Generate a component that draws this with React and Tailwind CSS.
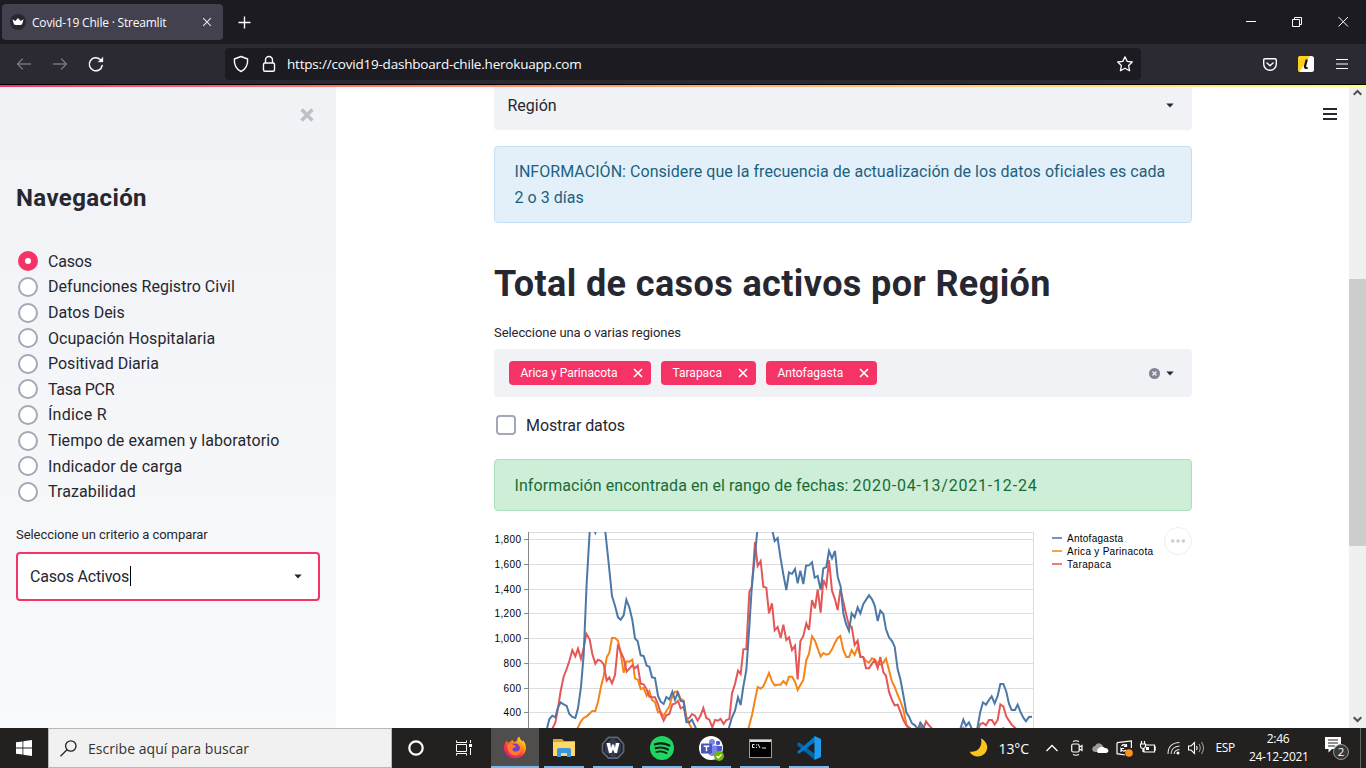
import React from "react";

const regions = [
  ["Casos", "tracking-[-0.2px]"],
  ["Defunciones Registro Civil", "tracking-[0.03px]"],
  ["Datos Deis", ""],
  ["Ocupación Hospitalaria", "tracking-[0.04px]"],
  ["Positivad Diaria", ""],
  ["Tasa PCR", "tracking-[-0.3px]"],
  ["Índice R", "tracking-[0.25px]"],
  ["Tiempo de examen y laboratorio", "tracking-[0.09px]"],
  ["Indicador de carga", "tracking-[0.11px]"],
  ["Trazabilidad", "tracking-[0.08px]"],
];

const ticks = [
  ["1,800", 539.5], ["1,600", 564.5], ["1,400", 589.5], ["1,200", 613.5],
  ["1,000", 638.5], ["800", 663.5], ["600", 688.5], ["400", 712.5],
];

const arica = [
  "290,630 303,604 311,594 320,589 337,573 346,573 354,545 363,500 371,468 380,412 388,398 396,354 405,354 414,362 422,400 431,458 439,424 448,425 457,419 465,475 474,480 482,507 491,504 500,527 508,513 516,540 525,547 534,577 542,576 551,588 559,573 568,560 577,527 585,515 594,516 602,537 611,542 619,590 628,612 638,630",
  "804,630 816,585 825,540 833,501 842,506 850,499 859,478 867,459 876,484 884,496 893,494 902,494 910,483 919,493 927,470 936,470 945,485 953,510 961,495 970,480 979,420 987,402 996,349 1005,362 1013,385 1022,410 1030,399 1039,404 1047,402 1056,388 1065,368 1073,354 1081,348 1090,390 1099,411 1107,411 1115,390 1124,405 1133,380 1141,408 1150,413 1158,423 1167,428 1176,415 1184,418 1193,430 1201,434 1210,428 1218,416 1227,450 1236,485 1244,500 1253,525 1261,543 1270,568 1279,612 1285,630",
  "1443,630 1450,623 1457,630",
  "1563,630 1570,624 1577,630",
];
const tarapaca = [
  "215,630 226,608 234,565 242,513 251,470 260,447 268,423 277,390 286,409 294,386 303,417 311,385 319,341 329,358 337,402 346,431 354,419 363,423 371,433 380,482 388,472 396,490 405,465 414,373 422,395 431,415 440,455 448,446 457,436 465,445 473,437 482,491 491,493 500,508 508,530 516,532 525,532 534,553 542,580 551,602 559,586 568,582 577,553 585,551 594,543 602,565 611,560 619,597 628,594 636,582 645,587 653,602 662,586 670,564 679,594 688,599 697,622 705,600 714,602 722,597 731,612 739,600 748,597 756,520 765,492 774,452 782,462 790,388 799,387 808,215 816,200 825,66 833,138 842,123 850,200 859,203 867,280 876,250 884,331 893,321 902,354 910,314 919,360 927,352 936,390 945,377 953,478 961,364 970,348 979,310 987,330 996,240 1005,265 1013,208 1022,278 1030,180 1039,200 1047,120 1056,212 1065,238 1073,270 1081,208 1090,245 1099,285 1107,317 1115,320 1124,375 1133,362 1141,411 1150,411 1158,445 1167,445 1176,431 1184,420 1193,444 1201,411 1210,456 1218,468 1227,515 1236,540 1244,556 1253,554 1261,575 1270,600 1279,616 1290,624 1300,632",
  "1317,630 1321,618 1330,628 1338,604 1347,616 1360,630",
  "1494,630 1501,612 1509,609 1518,616 1527,600 1536,600 1544,614 1553,600 1561,553 1570,559 1579,590 1587,602 1595,614 1610,628",
];
const antofagasta = [
  "200,630 208,597 217,587 226,592 234,562 242,547 251,553 260,558 268,582 277,591 286,594 294,565 303,500 311,405 320,190 329,36 338,20 346,38 352,20 370,20 376,36 385,120 396,228 405,257 414,292 422,299 431,286 439,239 448,262 457,300 465,355 473,364 482,406 491,408 500,437 508,440 516,472 525,474 534,527 542,545 551,552 559,531 568,538 577,515 585,540 593,518 602,543 611,545 619,606 628,607 636,599 650,630",
  "745,630 756,592 765,572 774,532 782,555 790,500 799,450 808,320 816,190 825,105 832,30 840,10 870,10 878,36 884,63 893,54 901,110 910,163 919,210 927,157 936,162 945,147 953,190 961,152 970,192 978,137 987,136 996,127 1004,173 1013,168 1022,210 1030,145 1039,141 1047,93 1056,115 1065,93 1073,170 1082,200 1090,280 1098,312 1107,333 1115,280 1124,292 1133,262 1141,280 1150,252 1167,226 1176,238 1184,256 1193,303 1201,272 1210,282 1218,328 1227,352 1236,363 1244,380 1253,448 1261,477 1270,525 1279,577 1287,590 1296,610 1305,616 1314,628 1321,608 1330,620 1338,632",
  "1440,630 1450,599 1458,618 1467,607 1477,630",
  "1491,630 1501,575 1509,547 1518,554 1527,540 1535,529 1544,550 1553,528 1561,492 1570,492 1579,515 1587,552 1595,570 1605,570 1613,554 1621,575 1630,593 1638,604 1647,591 1656,590",
];

function Series({ lines, color }) {
  return lines.map((p) => (
    <polyline key={p} points={p} fill="none" stroke={color} strokeWidth="6" strokeLinejoin="miter" />
  ));
}

function Chart() {
  return (
    <svg className="mt-4 block shrink-0" width="698" height="201" viewBox="494 527 698 201">
      <defs>
        <clipPath id="plot"><rect x="528" y="532" width="506" height="196" /></clipPath>
      </defs>
      <g stroke="#ddd" strokeWidth="1" fill="none">
        {ticks.map(([l, y]) => <path key={l} d={`M528 ${y}H1034`} />)}
        <path d="M528 532.5H1033.5V728" />
      </g>
      <g stroke="#888" strokeWidth="1" fill="none">
        <path d="M528.5 532V728" />
        {ticks.map(([l, y]) => <path key={l} d={`M524 ${y}H529`} />)}
      </g>
      <g fontFamily="Liberation Sans, sans-serif" fontSize="10" fill="#000">
        {ticks.map(([l, y]) => (
          <text key={l} x="521" y={y + 3.5} textAnchor="end" textLength={l.length === 5 ? 26.5 : 17.5}>{l}</text>
        ))}
        <text x="1067" y="541.5" textLength="56">Antofagasta</text>
        <text x="1067" y="554.5" textLength="86">Arica y Parinacota</text>
        <text x="1067" y="567.5" textLength="44">Tarapaca</text>
      </g>
      <g clipPath="url(#plot)">
        <g transform="translate(480 520) scale(0.33333)">
          <Series lines={arica} color="#f58518" />
          <Series lines={tarapaca} color="#e45756" />
          <Series lines={antofagasta} color="#4c78a8" />
        </g>
      </g>
      <path d="M1052 538H1062" stroke="#7496bd" strokeWidth="2" />
      <path d="M1052 551H1062" stroke="#f9a04d" strokeWidth="2" />
      <path d="M1052 564H1062" stroke="#eb7d7c" strokeWidth="2" />
      <circle cx="1178" cy="541" r="13.5" fill="#fff" stroke="#eee" />
      <g fill="#cfcfcf"><circle cx="1172.7" cy="541" r="1.8" /><circle cx="1178" cy="541" r="1.8" /><circle cx="1183.3" cy="541" r="1.8" /></g>
    </svg>
  );
}

function Caret() {
  return <svg width="8" height="5" viewBox="0 0 8 5" className="shrink-0"><path d="M0.3 0.4H7.7L4 4.6Z" fill="#262730" /></svg>;
}

function Tag({ children, w, tracking }) {
  return (
    <div className={"flex h-6 items-center justify-between rounded bg-[#f63366] pr-2 pl-[11.5px] text-[12px] text-white " + w}>
      <span className={"whitespace-nowrap " + tracking}>{children}</span>
      <svg width="10" height="10" viewBox="0 0 10 10" stroke="#fff" strokeWidth="1.7"><path d="M1 1L9 9M9 1L1 9" /></svg>
    </div>
  );
}

function Browser() {
  return (
    <header className="shrink-0 font-['Open_Sans','Noto_Sans',sans-serif] text-[#fbfbfe]">
      <div className="flex h-11 bg-[#1c1b22]">
        <div className="mt-1 ml-0.5 flex h-9 w-[221px] items-center rounded bg-[#42414d] pr-[11px] pl-2">
          <svg width="16" height="16" viewBox="0 0 16 16"><circle cx="8" cy="8" r="8" fill="#262730" /><path d="M2.4 5.2L5.3 7L8 4L10.7 7L13.6 5.2L12 10.4C9.5 11.3 6.5 11.3 4 10.4Z" fill="#fff" /></svg>
          <span className="ml-1.5 flex-1 pt-0.5 text-[12px] tracking-[-0.2px] whitespace-nowrap">Covid-19 Chile · Streamlit</span>
          <svg width="10" height="10" viewBox="0 0 10 10" stroke="#e4e4ea" strokeWidth="1.1"><path d="M1.2 1.2L8.8 8.8M8.8 1.2L1.2 8.8" /></svg>
        </div>
        <svg className="mt-4 ml-[15px]" width="13" height="13" viewBox="0 0 13 13" stroke="#fff" strokeWidth="1.4"><path d="M6.5 .5V12.5M.5 6.5H12.5" /></svg>
        <div className="flex-1" />
        <svg className="mt-4 mr-[17px]" width="103" height="12" viewBox="0 0 103 12" fill="none" stroke="#fff">
          <path d="M0 5.5H10M46.5 3.5H53.5V10.5H46.5ZM48.5 3V1.5H55.5V8.5H54" />
          <path d="M92.5 1L102 10.5M102 1L92.5 10.5" />
        </svg>
      </div>
      <div className="flex h-[41px] items-center border-b border-black bg-[#2b2a33]">
        <svg className="ml-4" width="90" height="18" viewBox="0 0 90 18" fill="none" strokeWidth="1.3" strokeLinecap="round" strokeLinejoin="round">
          <g stroke="#77767e"><path d="M14.5 9H1.5M6.5 4L1.5 9L6.5 14" /><path d="M37.5 9H50.5M45.5 4L50.5 9L45.5 14" /></g>
          <g stroke="#fbfbfe" strokeWidth="1.5"><path d="M86.2 10.5A6.5 6.5 0 1 1 84.2 4.5L86 6.2" /><path d="M87 2.2V7H82.2Z" fill="#fbfbfe" strokeWidth=".3" /></g>
        </svg>
        <div className="ml-[119px] flex h-8 w-[916px] items-center rounded bg-[#1c1b22]">
          <svg className="ml-2 shrink-0" width="44" height="18" viewBox="0 0 44 18" fill="none" stroke="#fbfbfe" strokeWidth="1.4" strokeLinejoin="round">
            <path d="M8 1.5L14.6 4C15.2 9.5 12.5 14.5 8 16.5C3.5 14.5 .8 9.5 1.4 4Z" />
            <rect x="30.5" y="8" width="11" height="8.3" rx="1.5" /><path d="M32.5 8V5A3.5 3.5 0 0 1 39.5 5V8" />
          </svg>
          <span className="ml-[10px] flex-1 pt-px text-[13.5px] tracking-[-0.2px] whitespace-nowrap">https://covid19-dashboard-chile.herokuapp.com</span>
          <svg className="mr-2 shrink-0" width="16" height="16" viewBox="0 0 16 16" fill="none" stroke="#fbfbfe" strokeWidth="1.3" strokeLinejoin="round"><path d="M8 .8L10.2 5.4L15.3 6L11.6 9.5L12.6 14.8L8 12.2L3.4 14.8L4.4 9.5L.7 6L5.8 5.4Z" /></svg>
        </div>
        <div className="flex-1" />
        <svg width="14" height="13" viewBox="0 0 14 13" fill="none" stroke="#fbfbfe" strokeWidth="1.4" strokeLinejoin="round" strokeLinecap="round"><path d="M2 .8H12Q13.3 .8 13.3 2V6A6.3 6.2 0 0 1 .7 6V2Q.7 .8 2 .8Z" /><path d="M4 5L7 7.8L10 5" /></svg>
        <svg className="ml-[21px]" width="16" height="16" viewBox="0 0 16 16"><rect width="16" height="16" rx="2.5" fill="#fff" /><path d="M2.5 0H12L1.5 15.8Q0 15.5 0 13.5V2.5Q0 0 2.5 0Z" fill="#fdd019" /><path d="M8.8 3.5L7 10.3Q6.700 12.6 9.600 11.8" fill="none" stroke="#111" strokeWidth="2.2" /></svg>
        <svg className="mr-[18px] ml-[22px]" width="12" height="12" viewBox="0 0 12 12" stroke="#fbfbfe" strokeWidth="1.2"><path d="M0 1.5H12M0 6H12M0 10.5H12" /></svg>
      </div>
      <div className="h-0.5 bg-linear-to-r from-[#f63366] to-[#fffd80]" />
    </header>
  );
}

function Sidebar() {
  return (
    <aside className="flex w-[336px] shrink-0 flex-col bg-linear-to-b from-[#f0f2f6] to-[#f9fafb] px-4">
      <svg className="mt-[21px] mr-[6px] shrink-0 self-end" width="14" height="14" viewBox="0 0 14 14" stroke="#bfc0c5" strokeWidth="3.6"><path d="M1.6 1.6L12.4 12.4M12.4 1.6L1.6 12.4" /></svg>
      <h2 className="mt-[61px] text-[24px] leading-[30px] font-bold tracking-[0.4px]">Navegación</h2>
      <div className="mt-[35.6px] text-[16px]">
        {regions.map(([name, t], i) => (
          <div key={name} className="flex h-[25.6px] items-center pl-0.5">
            <span className={"flex size-5 shrink-0 items-center justify-center rounded-full " + (i === 0 ? "bg-[#f63366]" : "border-2 border-[#a3a8b8] bg-white")}>
              {i === 0 && <span className="size-1.5 rounded-full bg-white" />}
            </span>
            <span className={"pt-px pl-2.5 whitespace-nowrap " + t}>{name}</span>
          </div>
        ))}
      </div>
      <div className="mt-[20.4px] text-[13px] leading-5 tracking-[-0.05px]">Seleccione un criterio a comparar</div>
      <div className="mt-[7px] flex h-[49px] shrink-0 items-center rounded border-2 border-[#f63366] bg-white pr-4 pl-3">
        <span className="pt-0.5 text-[16px] tracking-[-0.2px]">Casos Activos</span>
        <span className="ml-px h-5 w-px bg-black" />
        <span className="flex-1" />
        <Caret />
      </div>
    </aside>
  );
}

function Main() {
  return (
    <main className="flex min-w-0 flex-1 overflow-hidden bg-white">
      <div className="ml-[158px] flex w-[698px] shrink-0 flex-col">
        <div className="flex h-[43px] shrink-0 items-start justify-between rounded-b bg-[#f0f2f6] pr-[18px] pl-[13.5px]">
          <span className="mt-[7px] text-[16px] leading-6">Región</span>
          <span className="mt-4"><Caret /></span>
        </div>
        <div className="mt-4 h-[77px] shrink-0 rounded border border-[#c5e0f2] bg-[#e4f0f9] px-[19.5px] py-3 text-[16px] leading-[25.6px] tracking-[0.045px] whitespace-nowrap text-[#1a6280]">
          INFORMACIÓN: Considere que la frecuencia de actualización de los datos oficiales es cada<br />2 o 3 días
        </div>
        <h1 className="mt-[36px] text-[36px] leading-[50px] font-bold tracking-[0.4px] whitespace-nowrap">Total de casos activos por Región</h1>
        <div className="mt-[14px] text-[13px] leading-5 tracking-[-0.07px]">Seleccione una o varias regiones</div>
        <div className="mt-[6px] flex h-12 shrink-0 items-center gap-2.5 rounded bg-[#f0f2f6] pr-[18px] pl-[15px]">
          <Tag w="w-[142px]" tracking="">Arica y Parinacota</Tag>
          <Tag w="w-[95px]" tracking="">Tarapaca</Tag>
          <Tag w="w-[111px]" tracking="">Antofagasta</Tag>
          <span className="flex-1" />
          <svg className="-mr-[3.5px]" width="11" height="11" viewBox="0 0 11 11"><circle cx="5.5" cy="5.5" r="5.5" fill="#808495" /><path d="M3.5 3.5L7.5 7.5M7.5 3.5L3.5 7.5" stroke="#f0f2f6" strokeWidth="1.3" /></svg>
          <Caret />
        </div>
        <div className="mt-[18px] flex h-5 items-center pl-0.5">
          <span className="size-5 rounded border-2 border-[#a3a8b8] bg-white" />
          <span className="pt-0.5 pl-2.5 text-[16px] tracking-[-0.08px]">Mostrar datos</span>
        </div>
        <div className="mt-6 flex h-[52px] shrink-0 items-center rounded border border-[#a9dfb9] bg-[#ceeed8] px-[19.5px] pt-0.5 text-[16px] whitespace-pre text-[#176c36]">
          <span className="tracking-[0.08px]">Información encontrada en el rango de fechas: </span>
          <span className="tracking-[0.8px]">2020-04-13/2021-12-24</span>
        </div>
        <Chart />
      </div>
      <svg className="mt-[21px] ml-[131px] shrink-0" width="14" height="13" viewBox="0 0 14 13" stroke="#262730" strokeWidth="2"><path d="M0 1H14M0 6H14M0 11H14" /></svg>
    </main>
  );
}

function Scrollbar() {
  return (
    <div className="flex w-[17px] shrink-0 flex-col items-center bg-[#f0f0f0]">
      <svg className="mt-[2px]" width="9" height="7" viewBox="0 0 9 7" fill="none" stroke="#505050" strokeWidth="2"><path d="M.7 5.8L4.5 2L8.3 5.8" /></svg>
      <div className="mt-[183px] h-[267px] w-full bg-[#cdcdcd]" />
      <div className="flex-1" />
      <svg className="mb-[5px]" width="9" height="7" viewBox="0 0 9 7" fill="none" stroke="#505050" strokeWidth="2"><path d="M.7 1.2L4.5 5L8.3 1.2" /></svg>
    </div>
  );
}

function TaskApp({ children, active }) {
  return (
    <div className={"flex h-10 flex-col items-center " + (active ? "w-12 bg-[#4f4e4d]" : "w-10")}>
      <div className="flex flex-1 items-center justify-center pt-0.5">{children}</div>
      <div className="h-0.5 w-full bg-[#76b9ed]" />
    </div>
  );
}

function Taskbar() {
  return (
    <footer className="flex h-10 shrink-0 items-center bg-[#22211f] font-['Open_Sans','Noto_Sans',sans-serif] text-white">
      <div className="flex w-12 justify-center">
        <svg width="16" height="16" viewBox="0 0 16 16" fill="#fff"><path d="M0 2.3L6.5 1.4V7.6H0ZM7.3 1.3L16 0V7.6H7.3ZM0 8.4H6.5V14.6L0 13.7ZM7.3 8.4H16V16L7.3 14.7Z" /></svg>
      </div>
      <div className="flex h-10 w-[344px] items-center border border-[#b8b8b8] bg-[#f1f1f1] pl-[11px]">
        <svg width="17" height="17" viewBox="0 0 17 17" fill="none" stroke="#222" strokeWidth="1.3"><circle cx="10.8" cy="6" r="5.2" /><path d="M7 9.8L.5 16.3" /></svg>
        <span className="ml-[11px] text-[14px] tracking-[0.04px] text-[#333]">Escribe aquí para buscar</span>
      </div>
      <svg className="ml-4" width="16" height="16" viewBox="0 0 16 16"><circle cx="8" cy="8" r="6.7" fill="none" stroke="#fff" strokeWidth="2.2" /></svg>
      <svg className="ml-8" width="16" height="16" viewBox="0 0 16 16" fill="none" stroke="#fff"><path d="M.5 .5V2.5H10.5V.5M.5 15.5V13.5H10.5V15.5M.5 4.5H10.5V11.5H.5ZM14.500 0V3M14.5 8V15" /><path d="M13 4H16V7H13Z" fill="#fff" stroke="none" /></svg>
      <div className="ml-[19px] flex">
        <TaskApp active>
          <svg width="24" height="24" viewBox="0 0 24 24">
            <defs><linearGradient id="fx" x1="1" y1="0" x2=".3" y2="1"><stop offset="0" stopColor="#fff44f" /><stop offset=".4" stopColor="#ff980e" /><stop offset=".7" stopColor="#ff3647" /><stop offset="1" stopColor="#e31587" /></linearGradient></defs>
            <path d="M3.5 4.5L5 7Q6 5.5 8 5.5L9 3.5L11 6L14 5Q14 2 16 .5Q17 3.500 19.500 5.5Q20 5 20 4Q23.500 8 23 13.5A11.2 10.7 0 0 1 .8 12.5Q.8 8 3.500 4.5Z" fill="url(#fx)" />
            <circle cx="12" cy="12.500" r="5" fill="#7540c9" /><path d="M4 9.5Q7 7 10.5 8.8L13 10.3Q12 12 9.500 12.2Q9 15.500 13 15.500Q17 15.500 17.500 10.500Q20 18 13 19.500Q5 20 4 9.500Z" fill="#ff7a2a" />
          </svg>
        </TaskApp>
        <div className="ml-[5px] flex gap-[9px]">
          <TaskApp><svg width="22" height="20" viewBox="0 0 22 20"><path d="M0 1H9L11 3H22V18H0Z" fill="#e5a420" /><path d="M0 4H22V18H0Z" fill="#ffd868" /><path d="M4 19V12Q4 10 6 10H16Q18 10 18 12V19H14V15H8V19Z" fill="#3b96dd" /></svg></TaskApp>
          <TaskApp><svg width="24" height="24" viewBox="0 0 24 24"><path d="M7.5 1.5H16.5L22.5 8V16L16.5 22H7.5L1.5 16V8Z" fill="#1b1e2b" stroke="#596174" strokeWidth="1.8" /><path d="M12 2L20 8V16L12 22L4 16V8Z" fill="#343a4d" /><path d="M5.500 7H9.200L10 12L11 8.500H13L14 12L14.800 7H18.500L16 17H13.500L12 13.500L10.500 17H8Z" fill="#fff" /></svg></TaskApp>
          <TaskApp><svg width="24" height="24" viewBox="0 0 24 24"><circle cx="12" cy="12" r="12" fill="#1ed760" /><g fill="none" stroke="#141d17" strokeLinecap="round"><path d="M5 8.3Q12.5 6 19.3 9.5" strokeWidth="2.4" /><path d="M5.6 12.3Q12 10.3 18 13.5" strokeWidth="2" /><path d="M6.3 16Q12 14.5 16.8 17.2" strokeWidth="1.7" /></g></svg></TaskApp>
          <TaskApp><svg width="25" height="25" viewBox="0 0 25 25"><circle cx="12" cy="12" r="12" fill="#fff" /><circle cx="13" cy="6" r="3" fill="#7b83eb" /><circle cx="19" cy="7" r="2.2" fill="#5059c9" /><path d="M9 9.5H18V16Q17 20 13.5 20Q10 20 9 17Z" fill="#7b83eb" /><path d="M18 10H23V14Q22 17.5 18 17Z" fill="#5059c9" /><rect x="2" y="7.5" width="11" height="10" rx="1" fill="#4b53bc" /><path d="M4.7 10.3H10.3M7.5 10.3V15.3" stroke="#fff" strokeWidth="1.5" /><circle cx="20" cy="20" r="5" fill="#6bb700" /><path d="M17.5 20L19.3 21.8L22.5 18.4" fill="none" stroke="#fff" strokeWidth="1.4" /></svg></TaskApp>
          <TaskApp><svg width="23" height="19" viewBox="0 0 23 19"><rect x=".5" y=".5" width="22" height="18" fill="#000" stroke="#999" /><path d="M1 1H22V3H1Z" fill="#d8d8d8" /><path d="M5.5 5.5H3.5V8.5H5.5M7.5 5.5V6.5M7.5 8V9M9 5L11 9M13 9H17" stroke="#fff" fill="none" strokeWidth=".9" /></svg></TaskApp>
          <TaskApp><svg width="24" height="24" viewBox="0 0 24 24"><path d="M0 8L2 6.3L18 18V24L1 10Z" fill="#0065a9" /><path d="M0 16L18 0V6L2 17.7Z" fill="#007acc" /><path d="M17.5 0L24 3V21L17.5 24Z" fill="#1f9cf0" /></svg></TaskApp>
        </div>
      </div>
      <div className="flex-1" />
      <svg width="19" height="20" viewBox="0 0 19 20"><path d="M12 .5C23 6 18 19 8 18.500Q3 18 .5 13.500C8 15 14 9 12 .5Z" fill="#fcc51c" /></svg>
      <span className="ml-[10px] pt-px text-[14px] tracking-[-0.1px]">13°C</span>
      <svg className="ml-[17px]" width="12" height="8" viewBox="0 0 12 8" fill="none" stroke="#fff" strokeWidth="1.3"><path d="M.5 7L6 1.5L11.5 7" /></svg>
      <svg className="ml-[13px]" width="12" height="16" viewBox="0 0 12 16" fill="none" stroke="#fff" strokeWidth="1.2"><rect x=".7" y="4" width="7.5" height="8" rx="1.5" /><path d="M8.5 7L11 5.5V10.5L8.5 9M2 1.5Q5 0 8 1.5M2 14.5Q5 16 8 14.5" /></svg>
      <svg className="ml-[9px]" width="17" height="12" viewBox="0 0 17 12"><path d="M1 9A3 3 0 0 1 3 4Q5 0 9 2Q11 3 11 5L6 10H3Q1.5 10 1 9Z" fill="#9a9a9a" /><path d="M6 11A3 3 0 0 1 7 6Q10 3 13 6Q16 6 16.5 9Q16 11 14 11Z" fill="#fff" /></svg>
      <svg className="ml-[7px]" width="17" height="17" viewBox="0 0 17 17" fill="none" stroke="#fff" strokeWidth="1.2"><path d="M1 2.700L15.400 1V8M9 15L1 13.700V2.700" /><path d="M5.500 6Q8 3.500 10.500 6M10.500 4V6.500H8M5 8.500H8M5 12V9Q7 12.500 10 10" /><circle cx="13" cy="13" r="3.8" fill="#ff9416" stroke="none" /></svg>
      <svg className="ml-[7px]" width="16" height="14" viewBox="0 0 16 14" fill="none" stroke="#fff" strokeWidth="1.2"><path d="M6 4H14.5V11H4V8M14.5 6H16V9H14.5M1.5 0V3M4.5 0V3M.5 3H5.5V5.5Q5 7.5 3 7.5Q1 7.5 .5 5.5ZM3 7.5V11" /><path d="M6 6H9V9H6Z" fill="#fff" stroke="none" /></svg>
      <svg className="ml-[11px]" width="13" height="14" viewBox="0 0 13 14" fill="none" stroke="#ddd" strokeWidth="1.1"><path d="M1 13Q1 2 12.5 1.5M4 13Q4.500 5.500 12.500 5M7 13Q7.500 9 12.500 8.500" /><circle cx="11" cy="12" r="1.5" fill="#fff" stroke="none" /></svg>
      <svg className="ml-2" width="17" height="14" viewBox="0 0 17 14" fill="none" stroke="#fff" strokeWidth="1.1"><path d="M.5 5H3L6.5 1.5V12.5L3 9H.5Z" /><path d="M8.5 5Q9.8 7 8.500 9" /><path d="M11 3Q13.500 7 11 11M13.500 1Q17.500 7 13.500 13" stroke="#999" /></svg>
      <span className="ml-[10.5px] text-[12px] tracking-[-0.3px]">ESP</span>
      <div className="ml-[14px] w-[58px] text-center text-[12px] leading-[18px] tracking-[-0.3px] whitespace-nowrap">2:46<br />24-12-2021</div>
      <svg className="ml-[18px]" width="26" height="26" viewBox="0 0 26 26"><path d="M0 2H16V14H7L3.5 17.5V14H0Z" fill="#fff" /><path d="M3 5H13M3 8H13M3 11H10" stroke="#22211f" strokeWidth="1" /><circle cx="16" cy="17" r="7.5" fill="#3a3938" stroke="#999" /><text x="16" y="21.2" textAnchor="middle" fontSize="11.5" fill="#fff">2</text></svg>
      <div className="ml-[9px] h-10 w-px bg-[#666]" />
      <div className="w-[5px]" />
    </footer>
  );
}

export default function App() {
  return (
    <div className="flex h-[768px] w-[1366px] flex-col overflow-hidden font-['Roboto',sans-serif] text-[#262730]">
      <Browser />
      <div className="flex min-h-0 flex-1 overflow-hidden">
        <Sidebar />
        <Main />
        <Scrollbar />
      </div>
      <Taskbar />
    </div>
  );
}
